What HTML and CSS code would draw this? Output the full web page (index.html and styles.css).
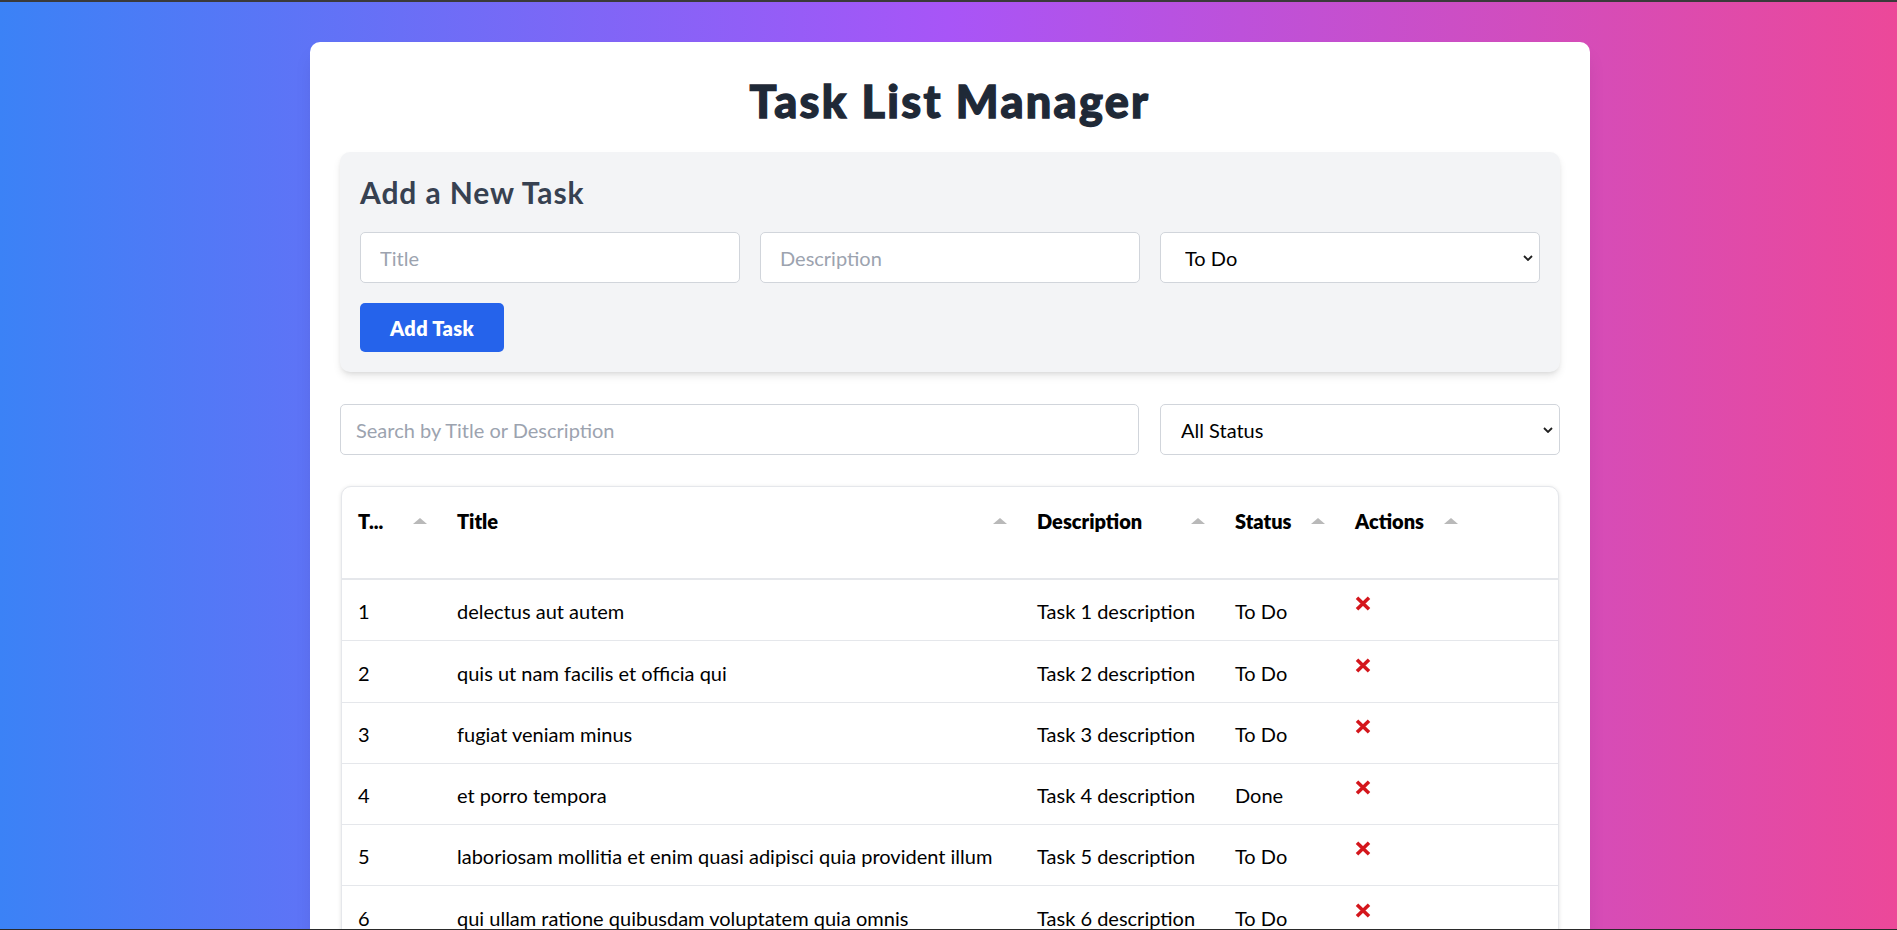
FILE: index.html
```html
<!DOCTYPE html>
<html lang="en">
<head>
<meta charset="utf-8">
<title>Task List Manager</title>
<link rel="stylesheet" href="styles.css">
</head>
<body>
<div class="frame-top"></div>
<main class="page">
  <div class="card">
    <h1 class="title">Task List Manager</h1>

    <section class="add-panel">
      <h2 class="panel-title">Add a New Task</h2>
      <div class="form-grid">
        <input class="field field-form" type="text" placeholder="Title">
        <input class="field field-form" type="text" placeholder="Description">
        <div class="select-wrap">
          <select class="field select select-form">
            <option>To Do</option>
            <option>In Progress</option>
            <option>Done</option>
          </select>
          <svg class="chevron" width="10" height="6" viewBox="0 0 10 6"><polyline points="1,1 5,5 9,1" fill="none" stroke="#1f1f1f" stroke-width="1.8"/></svg>
        </div>
      </div>
      <button class="btn" type="button">Add Task</button>
    </section>

    <div class="filters">
      <input class="field search" type="text" placeholder="Search by Title or Description">
      <div class="select-wrap status-filter">
        <select class="field select select-filter">
          <option>All Status</option>
          <option>To Do</option>
          <option>In Progress</option>
          <option>Done</option>
        </select>
        <svg class="chevron" width="10" height="6" viewBox="0 0 10 6"><polyline points="1,1 5,5 9,1" fill="none" stroke="#1f1f1f" stroke-width="1.8"/></svg>
      </div>
    </div>

    <div class="table-wrap">
      <table class="tasks">
        <colgroup>
          <col class="c-id"><col class="c-title"><col class="c-desc"><col class="c-status"><col class="c-actions"><col>
        </colgroup>
        <thead>
          <tr>
            <th><div class="th-in"><span>T...</span><i class="sort"></i></div></th>
            <th><div class="th-in"><span>Title</span><i class="sort"></i></div></th>
            <th><div class="th-in"><span>Description</span><i class="sort"></i></div></th>
            <th><div class="th-in"><span>Status</span><i class="sort"></i></div></th>
            <th><div class="th-in"><span>Actions</span><i class="sort"></i></div></th>
            <th></th>
          </tr>
        </thead>
        <tbody>
          <tr><td>1</td><td>delectus aut autem</td><td>Task 1 description</td><td>To Do</td><td><button class="del" type="button" aria-label="Delete"><svg width="16" height="15" viewBox="0 0 16 15"><path d="M2 1.8 L14 13.2 M14 1.8 L2 13.2" stroke="#d4161c" stroke-width="3.6" fill="none"/></svg></button></td><td></td></tr>
          <tr><td>2</td><td>quis ut nam facilis et officia qui</td><td>Task 2 description</td><td>To Do</td><td><button class="del" type="button" aria-label="Delete"><svg width="16" height="15" viewBox="0 0 16 15"><path d="M2 1.8 L14 13.2 M14 1.8 L2 13.2" stroke="#d4161c" stroke-width="3.6" fill="none"/></svg></button></td><td></td></tr>
          <tr><td>3</td><td>fugiat veniam minus</td><td>Task 3 description</td><td>To Do</td><td><button class="del" type="button" aria-label="Delete"><svg width="16" height="15" viewBox="0 0 16 15"><path d="M2 1.8 L14 13.2 M14 1.8 L2 13.2" stroke="#d4161c" stroke-width="3.6" fill="none"/></svg></button></td><td></td></tr>
          <tr><td>4</td><td>et porro tempora</td><td>Task 4 description</td><td>Done</td><td><button class="del" type="button" aria-label="Delete"><svg width="16" height="15" viewBox="0 0 16 15"><path d="M2 1.8 L14 13.2 M14 1.8 L2 13.2" stroke="#d4161c" stroke-width="3.6" fill="none"/></svg></button></td><td></td></tr>
          <tr><td>5</td><td>laboriosam mollitia et enim quasi adipisci quia provident illum</td><td>Task 5 description</td><td>To Do</td><td><button class="del" type="button" aria-label="Delete"><svg width="16" height="15" viewBox="0 0 16 15"><path d="M2 1.8 L14 13.2 M14 1.8 L2 13.2" stroke="#d4161c" stroke-width="3.6" fill="none"/></svg></button></td><td></td></tr>
          <tr><td>6</td><td>qui ullam ratione quibusdam voluptatem quia omnis</td><td>Task 6 description</td><td>To Do</td><td><button class="del" type="button" aria-label="Delete"><svg width="16" height="15" viewBox="0 0 16 15"><path d="M2 1.8 L14 13.2 M14 1.8 L2 13.2" stroke="#d4161c" stroke-width="3.6" fill="none"/></svg></button></td><td></td></tr>
          <tr><td>7</td><td>illo expedita consequatur quia in</td><td>Task 7 description</td><td>To Do</td><td><button class="del" type="button" aria-label="Delete"><svg width="16" height="15" viewBox="0 0 16 15"><path d="M2 1.8 L14 13.2 M14 1.8 L2 13.2" stroke="#d4161c" stroke-width="3.6" fill="none"/></svg></button></td><td></td></tr>
          <tr><td>8</td><td>quo adipisci enim quam ut ab</td><td>Task 8 description</td><td>Done</td><td><button class="del" type="button" aria-label="Delete"><svg width="16" height="15" viewBox="0 0 16 15"><path d="M2 1.8 L14 13.2 M14 1.8 L2 13.2" stroke="#d4161c" stroke-width="3.6" fill="none"/></svg></button></td><td></td></tr>
        </tbody>
      </table>
    </div>
  </div>
</main>
<div class="frame-bottom"></div>
</body>
</html>
```
FILE: styles.css
```css
html {
  scrollbar-width: none;
}

body {
  margin: 0;
  min-height: 100vh;
  font-family: Lato, "Open Sans", "Liberation Sans", sans-serif;
  font-size: 20px;
  color: #000;
  background: linear-gradient(to right, #3b82f6, #a855f7, #ec4899);
}

.frame-top {
  height: 2px;
  background: #3a3a3a;
}

.frame-bottom {
  position: fixed;
  left: 0;
  right: 0;
  bottom: 0;
  height: 1px;
  background: #2a2a2a;
}

.page {
  padding: 40px 0 40px 3px;
}

.card {
  max-width: 1280px;
  margin: 0 auto;
  box-sizing: border-box;
  background: #fff;
  border-radius: 10px;
  padding: 31px 30px 30px;
  box-shadow: 0 12px 20px -4px rgba(0, 0, 0, 0.1);
}

.title {
  margin: 0 0 26px;
  padding-top: 3px;
  text-align: center;
  font-size: 45px;
  line-height: 50px;
  font-weight: 900;
  letter-spacing: 2.3px;
  -webkit-text-stroke: 1.3px #1f2937;
  color: #1f2937;
}

.add-panel {
  background: #f3f4f6;
  border-radius: 10px;
  padding: 20px;
  margin-bottom: 32px;
  box-shadow: 0 5px 8px -1px rgba(0, 0, 0, 0.1), 0 2px 5px -2px rgba(0, 0, 0, 0.1);
}

.panel-title {
  margin: 0 0 20px;
  font-size: 30px;
  line-height: 40px;
  font-weight: 700;
  letter-spacing: 0.9px;
  color: #374151;
}

.form-grid {
  display: grid;
  grid-template-columns: repeat(3, 1fr);
  gap: 20px;
  margin-bottom: 20px;
}

.field {
  box-sizing: border-box;
  width: 100%;
  height: 51px;
  margin: 0;
  border: 1px solid #d1d5db;
  border-radius: 5px;
  background: #fff;
  font-family: inherit;
  font-size: 20px;
  color: #111;
  outline: none;
}

.field::placeholder {
  color: #9ca3af;
}

.field-form {
  padding: 0 19px;
}

.select-wrap {
  position: relative;
}

.select {
  -webkit-appearance: none;
  appearance: none;
  padding: 0 30px 0 24px;
  color: #000;
}

.select-filter {
  padding-left: 20px;
}

.chevron {
  position: absolute;
  right: 7px;
  top: 50%;
  margin-top: -3px;
  pointer-events: none;
}

.btn {
  display: block;
  width: 144px;
  height: 49px;
  padding: 0;
  border: none;
  border-radius: 5px;
  background: #2563eb;
  color: #fff;
  font-family: inherit;
  font-size: 20px;
  font-weight: 800;
  letter-spacing: 0.3px;
}

.filters {
  display: flex;
  gap: 21px;
  margin-bottom: 31px;
}

.search {
  flex: 1;
  padding: 0 15px;
}

.status-filter {
  width: 400px;
  flex: none;
}

.table-wrap {
  margin: 0 1px;
  border: 1px solid #e5e7eb;
  border-radius: 10px;
  overflow: hidden;
  background: #fff;
  box-shadow: 0 1px 4px rgba(0, 0, 0, 0.12);
}

.tasks {
  width: 100%;
  table-layout: fixed;
  border-collapse: separate;
  border-spacing: 0;
}

.c-id { width: 99px; }
.c-title { width: 580px; }
.c-desc { width: 198px; }
.c-status { width: 120px; }
.c-actions { width: 133px; }

.tasks th {
  padding: 19px 14px 42px 16px;
  border-bottom: 2px solid #e5e7eb;
  text-align: left;
  vertical-align: top;
  font-weight: 800;
  line-height: 30px;
  white-space: nowrap;
}

.th-in {
  display: flex;
  align-items: center;
  justify-content: space-between;
}

.sort {
  width: 0;
  height: 0;
  border-left: 7px solid transparent;
  border-right: 7px solid transparent;
  border-bottom: 6px solid #b9b9b9;
}

.tasks td {
  padding: 16.25px 16px 14px;
  border-bottom: 1px solid #e5e7eb;
  line-height: 30px;
  vertical-align: top;
  white-space: nowrap;
}

.del {
  display: block;
  margin-top: 0;
  padding: 0;
  border: none;
  background: none;
  line-height: 0;
}
```
